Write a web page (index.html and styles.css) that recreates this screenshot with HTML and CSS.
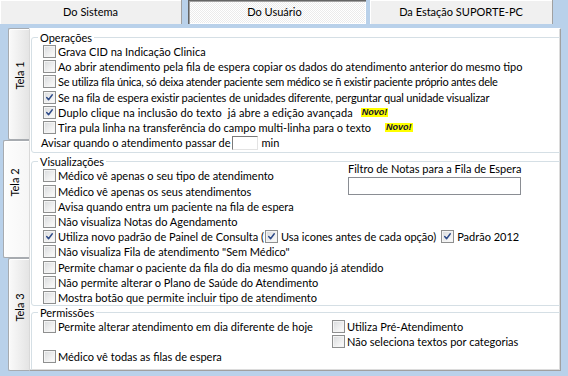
FILE: index.html
```html
<!DOCTYPE html>
<html lang="pt-BR">
<head>
  <meta charset="UTF-8">
  <title>Configurações do Atendimento</title>
  <link rel="stylesheet" href="styles.css">
</head>
<body>
<div class="window">
  <div class="top-tabs">
    <div class="ttab sistema">Do Sistema</div>
    <div class="ttab usuario">Do Usuário</div>
    <div class="ttab estacao">Da Estação SUPORTE-PC</div>
  </div>

  <div class="main">
    <div class="side-tabs">
      <div class="stab tela1"><span>Tela 1</span></div>
      <div class="stab tela2"><span>Tela 2</span></div>
      <div class="stab tela3"><span>Tela 3</span></div>
    </div>

    <div class="panel">
      <fieldset class="group ops">
        <legend>Operações</legend>
        <label class="row"><span class="cb"></span>Grava CID na Indicação Clinica</label>
        <label class="row"><span class="cb"></span>Ao abrir atendimento pela fila de espera copiar os dados do atendimento anterior do mesmo tipo</label>
        <label class="row condensed"><span class="cb"></span>Se utiliza fila única, só deixa atender paciente sem médico se ñ existir paciente próprio antes dele</label>
        <label class="row narrow"><span class="cb on"><svg viewBox="0 0 13 13"><path d="M3.2 6.6 L5.4 9.2 L9.8 3.2"/></svg></span>Se na fila de espera existir pacientes de unidades diferente, perguntar qual unidade visualizar</label>
        <label class="row wider"><span class="cb on"><svg viewBox="0 0 13 13"><path d="M3.2 6.6 L5.4 9.2 L9.8 3.2"/></svg></span>Duplo clique na inclusão do texto&nbsp; já abre a edição avançada<span class="novo">Novo!</span></label>
        <label class="row"><span class="cb"></span>Tira pula linha na transferência do campo multi-linha para o texto<span class="novo far">Novo!</span></label>
        <div class="row plain">Avisar quando o atendimento passar de <span class="num"></span> min</div>
      </fieldset>

      <fieldset class="group vis">
        <legend>Visualizações</legend>
        <div class="vis-grid">
          <label class="row"><span class="cb"></span>Médico vê apenas o seu tipo de atendimento</label>
          <div class="filtro">
            <div class="filtro-label">Filtro de Notas para a Fila de Espera</div>
            <div class="filtro-box"></div>
          </div>
          <label class="row"><span class="cb"></span>Médico vê apenas os seus atendimentos</label>
          <label class="row"><span class="cb"></span>Avisa quando entra um paciente na fila de espera</label>
          <label class="row wide"><span class="cb"></span>Não visualiza Notas do Agendamento</label>
          <div class="row wide">
            <span class="cb on"><svg viewBox="0 0 13 13"><path d="M3.2 6.6 L5.4 9.2 L9.8 3.2"/></svg></span>Utiliza novo padrão de Painel de Consulta (<span class="cb on inner"><svg viewBox="0 0 13 13"><path d="M3.2 6.6 L5.4 9.2 L9.8 3.2"/></svg></span>Usa icones antes de cada opção)
            <span class="cb on inner gap"><svg viewBox="0 0 13 13"><path d="M3.2 6.6 L5.4 9.2 L9.8 3.2"/></svg></span>Padrão 2012
          </div>
          <label class="row wide"><span class="cb"></span>Não visualiza Fila de atendimento "Sem Médico"</label>
          <label class="row wide"><span class="cb"></span>Permite chamar o paciente da fila do dia mesmo quando já atendido</label>
          <label class="row wide"><span class="cb"></span>Não permite alterar o Plano de Saúde do Atendimento</label>
          <label class="row wide"><span class="cb"></span>Mostra botão que permite incluir tipo de atendimento</label>
        </div>
      </fieldset>

      <fieldset class="group perm">
        <legend>Permissões</legend>
        <div class="perm-grid">
          <div class="perm-col">
            <label class="row"><span class="cb"></span>Permite alterar atendimento em dia diferente de hoje</label>
            <div class="row"></div>
            <label class="row"><span class="cb"></span>Médico vê todas as filas de espera</label>
          </div>
          <div class="perm-col right">
            <label class="row"><span class="cb"></span>Utiliza Pré-Atendimento</label>
            <label class="row"><span class="cb"></span>Não seleciona textos por categorias</label>
          </div>
        </div>
      </fieldset>
    </div>
  </div>
</div>
</body>
</html>
```

FILE: styles.css
```css
body {
  margin: 0;
  background-color: #b9d1ea;
  font-family: Lato, "Liberation Sans", sans-serif;
  font-size: 11px;
  color: #000;
}
.window {
  width: 568px;
  height: 376px;
  display: flex;
  flex-direction: column;
  overflow: hidden;
}

/* tabs on top */
.top-tabs {
  display: flex;
  height: 24px;
  margin-bottom: 4px;
}
.ttab {
  display: flex;
  align-items: center;
  justify-content: center;
  padding-bottom: 2px;
  box-sizing: border-box;
  background-color: #f0f0f0;
  border-right: 1px solid #a0a0a0;
  box-shadow: inset 1px 1px 0 #fff;
}
.sistema {
  width: 182px;
  margin-right: 6px;
}
.usuario {
  width: 178px;
  margin-right: 4px;
  border: none;
  border-top: 1px solid #646464;
  border-left: 1px solid #646464;
  box-shadow: inset 1px 1px 0 #a0a0a0, inset -1px -1px 0 #fff;
  background: repeating-conic-gradient(#fff 0 25%, #ebebeb 0 50%) 0 0 / 2px 2px;
  padding-right: 6px;
}
.estacao {
  width: 183px;
}

/* main area */
.main {
  display: flex;
  height: 343px;
}
.side-tabs {
  width: 29px;
  display: flex;
  flex-direction: column;
}
.stab {
  margin-left: 8px;
  box-sizing: border-box;
  border: 1px solid #a7abb0;
  border-right: none;
  border-radius: 2px 0 0 2px;
  background: linear-gradient(to right, #fafafa, #ededed 60%, #e4e4e4);
  box-shadow: inset 1px 1px 0 #fff;
  display: flex;
  flex-direction: column;
  align-items: center;
  padding-top: 40px;
}
.stab span {
  display: block;
  white-space: nowrap;
  line-height: 13px;
  transform: rotate(-90deg);
}
.tela1 {
  height: 112px;
}
.tela2 {
  height: 118px;
  margin-left: 3px;
  padding-top: 35px;
  padding-right: 5px;
  background: linear-gradient(to right, #fdfdfd, #f6f6f6);
}
.tela3 {
  height: 113px;
  padding-top: 42px;
}

.panel {
  width: 532px;
  box-sizing: border-box;
  background-color: #fff;
  border-left: 1px solid #d9d9d9;
  border-top: 1px solid #fff;
  border-right: 1px solid #a0a0a0;
  border-bottom: 1px solid #a0a0a0;
  box-shadow: inset -1px -1px 0 #dcdcdc;
  padding-top: 2px;
  overflow: hidden;
  display: flex;
  flex-direction: column;
}

/* group boxes */
.group {
  margin: 0 -6px 0 1px;
  padding: 0 0 1.5px 0;
  border: 1px solid #d5dfe5;
  border-radius: 3px;
  min-width: 0;
}
.group legend {
  margin-left: 6px;
  padding: 0 2px;
  line-height: 13px;
}
.vis {
  margin-top: 2.5px;
  padding-bottom: 0;
}
.perm {
  flex: 1;
  margin-bottom: -6px;
}

.row {
  display: flex;
  align-items: center;
  height: 15.2px;
  padding-left: 11px;
  white-space: nowrap;
}
.row.plain {
  padding-left: 9px;
}
.row.condensed {
  letter-spacing: -0.26px;
}
.row.narrow {
  letter-spacing: -0.14px;
}
.row.wider {
  letter-spacing: 0.1px;
}
.cb {
  width: 13px;
  height: 13px;
  box-sizing: border-box;
  flex: none;
  margin-right: 2px;
  border: 1px solid #8e8f8f;
  background: linear-gradient(135deg, #d8dadc, #f4f4f4 70%, #fdfdfd);
  box-shadow: inset 0 0 0 1px #f4f4f4;
}
.cb svg {
  display: block;
  width: 11px;
  height: 11px;
}
.cb path {
  fill: none;
  stroke: #2d4a88;
  stroke-width: 1.7;
  stroke-linejoin: round;
  stroke-linecap: round;
}
.cb.inner {
  margin-left: 1px;
  margin-right: 3px;
}
.cb.gap {
  margin-left: 5px;
}

.novo {
  margin-left: 8px;
  padding: 0 1px;
  background-color: #ffff00;
  color: #101030;
  font-family: "Liberation Sans", sans-serif;
  font-weight: bold;
  font-style: italic;
  font-size: 9px;
  line-height: 9px;
  letter-spacing: 0;
}
.novo.far {
  margin-left: 14px;
}
.num {
  display: inline-block;
  width: 26px;
  height: 14px;
  box-sizing: border-box;
  margin: 0 3px 0 2px;
  border-top: 1px solid #7a7a7a;
  border-left: 1px solid #7a7a7a;
  border-right: 1px solid #e3e3e3;
  border-bottom: 1px solid #e3e3e3;
}

.vis-grid {
  display: grid;
  grid-template-columns: 316px 1fr;
}
.vis-grid .wide {
  grid-column: 1 / -1;
}
.filtro {
  grid-column: 2;
  grid-row: 1 / span 3;
  margin-top: -6px;
}
.filtro-label {
  line-height: 13px;
}
.filtro-box {
  width: 173px;
  height: 18px;
  box-sizing: border-box;
  margin-top: 1.5px;
  border: 1px solid #8a8d93;
}

.perm-grid {
  display: grid;
  grid-template-columns: 300px 1fr;
}
.perm-col.right .row {
  padding-left: 0;
}
```
